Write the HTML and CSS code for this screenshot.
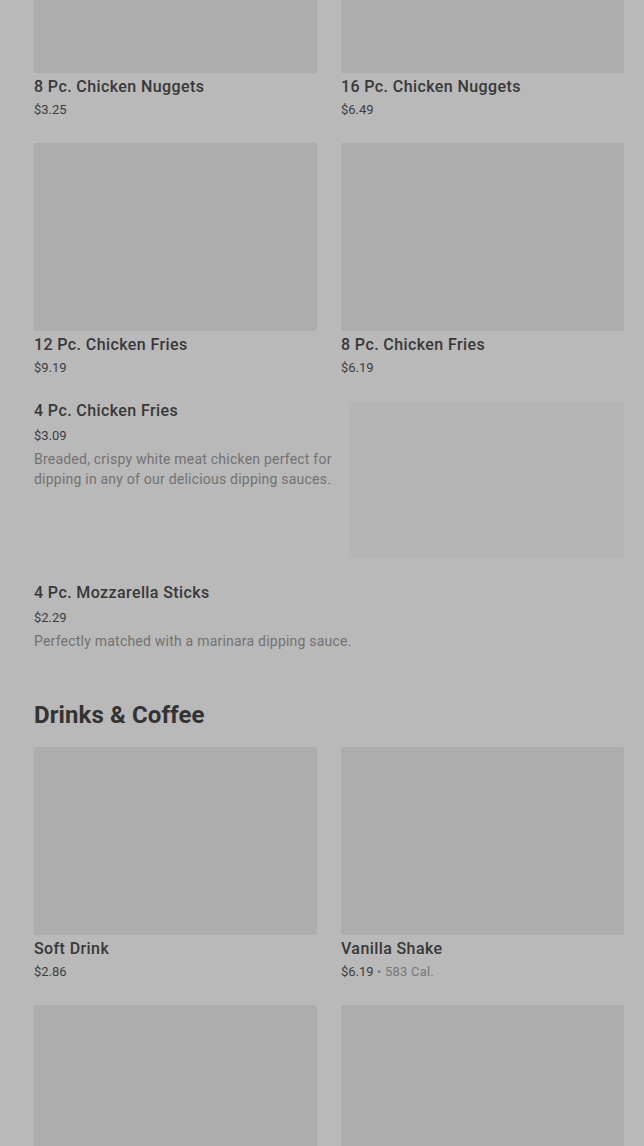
FILE: index.html
```html
<!DOCTYPE html>
<html lang="en">
<head>
<meta charset="utf-8">
<title>Menu</title>
<link rel="stylesheet" href="styles.css">
</head>
<body>
<main class="menu">
  <section class="grid">
    <article class="card">
      <div class="thumb"></div>
      <h3 class="title">8 Pc. Chicken Nuggets</h3>
      <p class="meta"><span class="price">$3.25</span></p>
    </article>
    <article class="card">
      <div class="thumb"></div>
      <h3 class="title">16 Pc. Chicken Nuggets</h3>
      <p class="meta"><span class="price">$6.49</span></p>
    </article>
    <article class="card">
      <div class="thumb"></div>
      <h3 class="title">12 Pc. Chicken Fries</h3>
      <p class="meta"><span class="price">$9.19</span></p>
    </article>
    <article class="card">
      <div class="thumb"></div>
      <h3 class="title">8 Pc. Chicken Fries</h3>
      <p class="meta"><span class="price">$6.19</span></p>
    </article>
  </section>

  <section class="list">
    <article class="row">
      <div class="row-text">
        <h3 class="title">4 Pc. Chicken Fries</h3>
        <p class="meta"><span class="price">$3.09</span></p>
        <p class="desc">Breaded, crispy white meat chicken perfect for dipping in any of our delicious dipping sauces.</p>
      </div>
      <div class="row-thumb"></div>
    </article>
    <article class="row">
      <div class="row-text wide">
        <h3 class="title">4 Pc. Mozzarella Sticks</h3>
        <p class="meta"><span class="price">$2.29</span></p>
        <p class="desc">Perfectly matched with a marinara dipping sauce.</p>
      </div>
    </article>
  </section>

  <h2 class="section-title">Drinks &amp; Coffee</h2>

  <section class="grid">
    <article class="card">
      <div class="thumb"></div>
      <h3 class="title">Soft Drink</h3>
      <p class="meta"><span class="price">$2.86</span></p>
    </article>
    <article class="card">
      <div class="thumb"></div>
      <h3 class="title">Vanilla Shake</h3>
      <p class="meta"><span class="price">$6.19</span><span class="cal"> • 583 Cal.</span></p>
    </article>
    <article class="card">
      <div class="thumb"></div>
    </article>
    <article class="card">
      <div class="thumb"></div>
    </article>
  </section>
</main>
</body>
</html>
```

FILE: styles.css
```css
* { box-sizing: border-box; }

html, body {
  margin: 0;
  padding: 0;
  background: #b9b9b9;
  font-family: Roboto, "Liberation Sans", Arial, sans-serif;
  color: #333333;
}

.menu {
  margin-top: -115px;
  padding: 0 20px 0 34px;
}

.grid {
  display: grid;
  grid-template-columns: 283px 283px;
  column-gap: 24px;
  row-gap: 24px;
}

.card {
  display: flex;
  flex-direction: column;
}

.thumb {
  height: 188px;
  background: #adadad;
  border-radius: 2px;
}

.title {
  margin: 4px 0 0;
  font-size: 16px;
  line-height: 20px;
  font-weight: 500;
  color: #383838;
  letter-spacing: 0.4px;
}

.meta {
  margin: 4px 0 0;
  font-size: 13px;
  line-height: 18px;
  color: #3d3d3d;
}

.cal { color: #787878; letter-spacing: 0.2px; }

.list {
  display: flex;
  flex-direction: column;
  gap: 25px;
  margin-top: 24px;
}

.row {
  display: flex;
  gap: 16px;
}

.row-text {
  width: 299px;
  flex: none;
}

.row-text.wide { width: auto; }

.row .title { margin-top: 0; }

.row .meta { margin-top: 6px; }

.desc {
  margin: 4px 0 0;
  font-size: 14px;
  line-height: 20px;
  color: #727272;
  letter-spacing: 0.22px;
}

.row-thumb {
  margin-top: 1px;
  width: 275px;
  height: 156px;
  background: #b5b5b5;
  border-radius: 2px;
}

.section-title {
  margin: 48px 0 16px;
  font-size: 24px;
  line-height: 32px;
  font-weight: 700;
  color: #333333;
  letter-spacing: 0.1px;
}
```
